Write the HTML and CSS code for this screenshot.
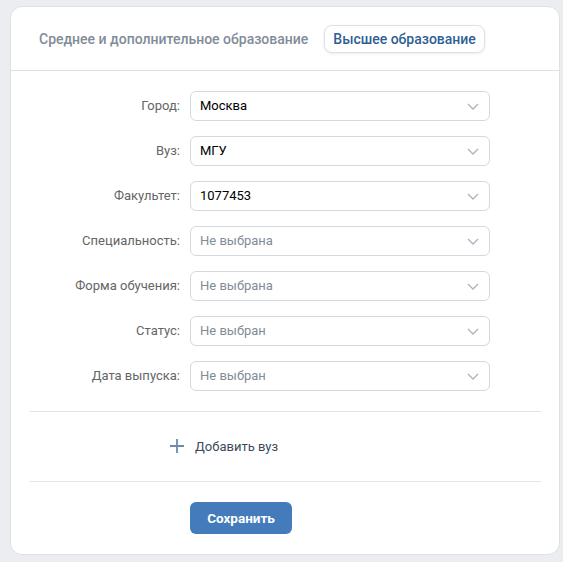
FILE: index.html
```html
<!DOCTYPE html>
<html lang="ru">
<head>
<meta charset="utf-8">
<link rel="stylesheet" href="styles.css">
</head>
<body>
<div class="card">
  <div class="tabs">
    <div class="tab">Среднее и дополнительное образование</div>
    <div class="tab tab-active">Высшее образование</div>
  </div>
  <div class="form">
    <div class="row">
      <div class="label">Город:</div>
      <div class="select"><span class="value">Москва</span><svg class="chev" viewBox="0 0 12 7"><path d="M1 1l5 5 5-5"/></svg></div>
    </div>
    <div class="row">
      <div class="label">Вуз:</div>
      <div class="select"><span class="value">МГУ</span><svg class="chev" viewBox="0 0 12 7"><path d="M1 1l5 5 5-5"/></svg></div>
    </div>
    <div class="row">
      <div class="label">Факультет:</div>
      <div class="select"><span class="value">1077453</span><svg class="chev" viewBox="0 0 12 7"><path d="M1 1l5 5 5-5"/></svg></div>
    </div>
    <div class="row">
      <div class="label">Специальность:</div>
      <div class="select"><span class="value placeholder">Не выбрана</span><svg class="chev" viewBox="0 0 12 7"><path d="M1 1l5 5 5-5"/></svg></div>
    </div>
    <div class="row">
      <div class="label">Форма обучения:</div>
      <div class="select"><span class="value placeholder">Не выбрана</span><svg class="chev" viewBox="0 0 12 7"><path d="M1 1l5 5 5-5"/></svg></div>
    </div>
    <div class="row">
      <div class="label">Статус:</div>
      <div class="select"><span class="value placeholder">Не выбран</span><svg class="chev" viewBox="0 0 12 7"><path d="M1 1l5 5 5-5"/></svg></div>
    </div>
    <div class="row">
      <div class="label">Дата выпуска:</div>
      <div class="select"><span class="value placeholder">Не выбран</span><svg class="chev" viewBox="0 0 12 7"><path d="M1 1l5 5 5-5"/></svg></div>
    </div>
  </div>
  <div class="add-block">
    <div class="add">
      <svg class="plus" viewBox="0 0 14 14"><path d="M7 0v14M0 7h14"/></svg>
      <span>Добавить вуз</span>
    </div>
  </div>
  <div class="footer">
    <button class="save">Сохранить</button>
  </div>
</div>
</body>
</html>
```

FILE: styles.css
```css
* { box-sizing: border-box; }
html, body { margin: 0; padding: 0; }
body {
  background: #ebedf0;
  font-family: Roboto, "Noto Sans", Arial, sans-serif;
  font-size: 13px;
  padding: 6px 3px 0 10px;
}
.card {
  width: 550px;
  height: 549px;
  background: #fff;
  border: 1px solid #dce1e6;
  border-radius: 12px;
}
.tabs {
  display: flex;
  align-items: center;
  gap: 7px;
  height: 64px;
  padding: 0 20px 0 19px;
  border-bottom: 1px solid #dce1e6;
}
.tab {
  height: 28px;
  line-height: 26px;
  padding: 0 8px;
  border: 1px solid transparent;
  border-radius: 8px;
  font-weight: 500;
  color: #818c99;
  font-size: 14px;
}
.tab-active {
  color: #2f5f94;
  background: #fff;
  border-color: #dce1e6;
  box-shadow: 0 1px 3px rgba(0,0,0,0.08);
}
.form {
  display: flex;
  flex-direction: column;
  gap: 15px;
  padding: 20px 0 20px 19px;
}
.row {
  display: grid;
  grid-template-columns: 150px 300px;
  column-gap: 10px;
  align-items: center;
  line-height: 15px;
}
.label {
  text-align: right;
  color: #656565;
  padding-bottom: 2px;
}
.select {
  height: 30px;
  border: 1px solid #d3d9de;
  border-radius: 6px;
  display: flex;
  align-items: center;
  justify-content: space-between;
  padding: 0 10px 2px 9px;
}
.chev { margin-top: 2px; }
.value { color: #000; }
.value.placeholder { color: #818c99; }
.chev {
  width: 12px;
  height: 7px;
  fill: none;
  stroke: #aab3bd;
  stroke-width: 1.3;
}
.add-block {
  margin: 0 18px 0 19px;
  border-top: 1px solid #e1e3e6;
  border-bottom: 1px solid #e1e3e6;
  height: 71px;
  display: flex;
  align-items: center;
  padding-left: 140px;
  padding-bottom: 1px;
}
.add {
  display: flex;
  align-items: center;
  gap: 11px;
  color: #3d4a58;
}
.plus {
  width: 14px;
  height: 14px;
  fill: none;
  stroke: #6e8aa8;
  stroke-width: 1.8;
}
.footer {
  padding: 20px 0 0 179px;
}
.save {
  width: 102px;
  height: 32px;
  border: none;
  border-radius: 6px;
  background: #447bba;
  color: #fff;
  font-family: Roboto, "Noto Sans", Arial, sans-serif;
  font-size: 13.5px;
  font-weight: 700;
}
```
